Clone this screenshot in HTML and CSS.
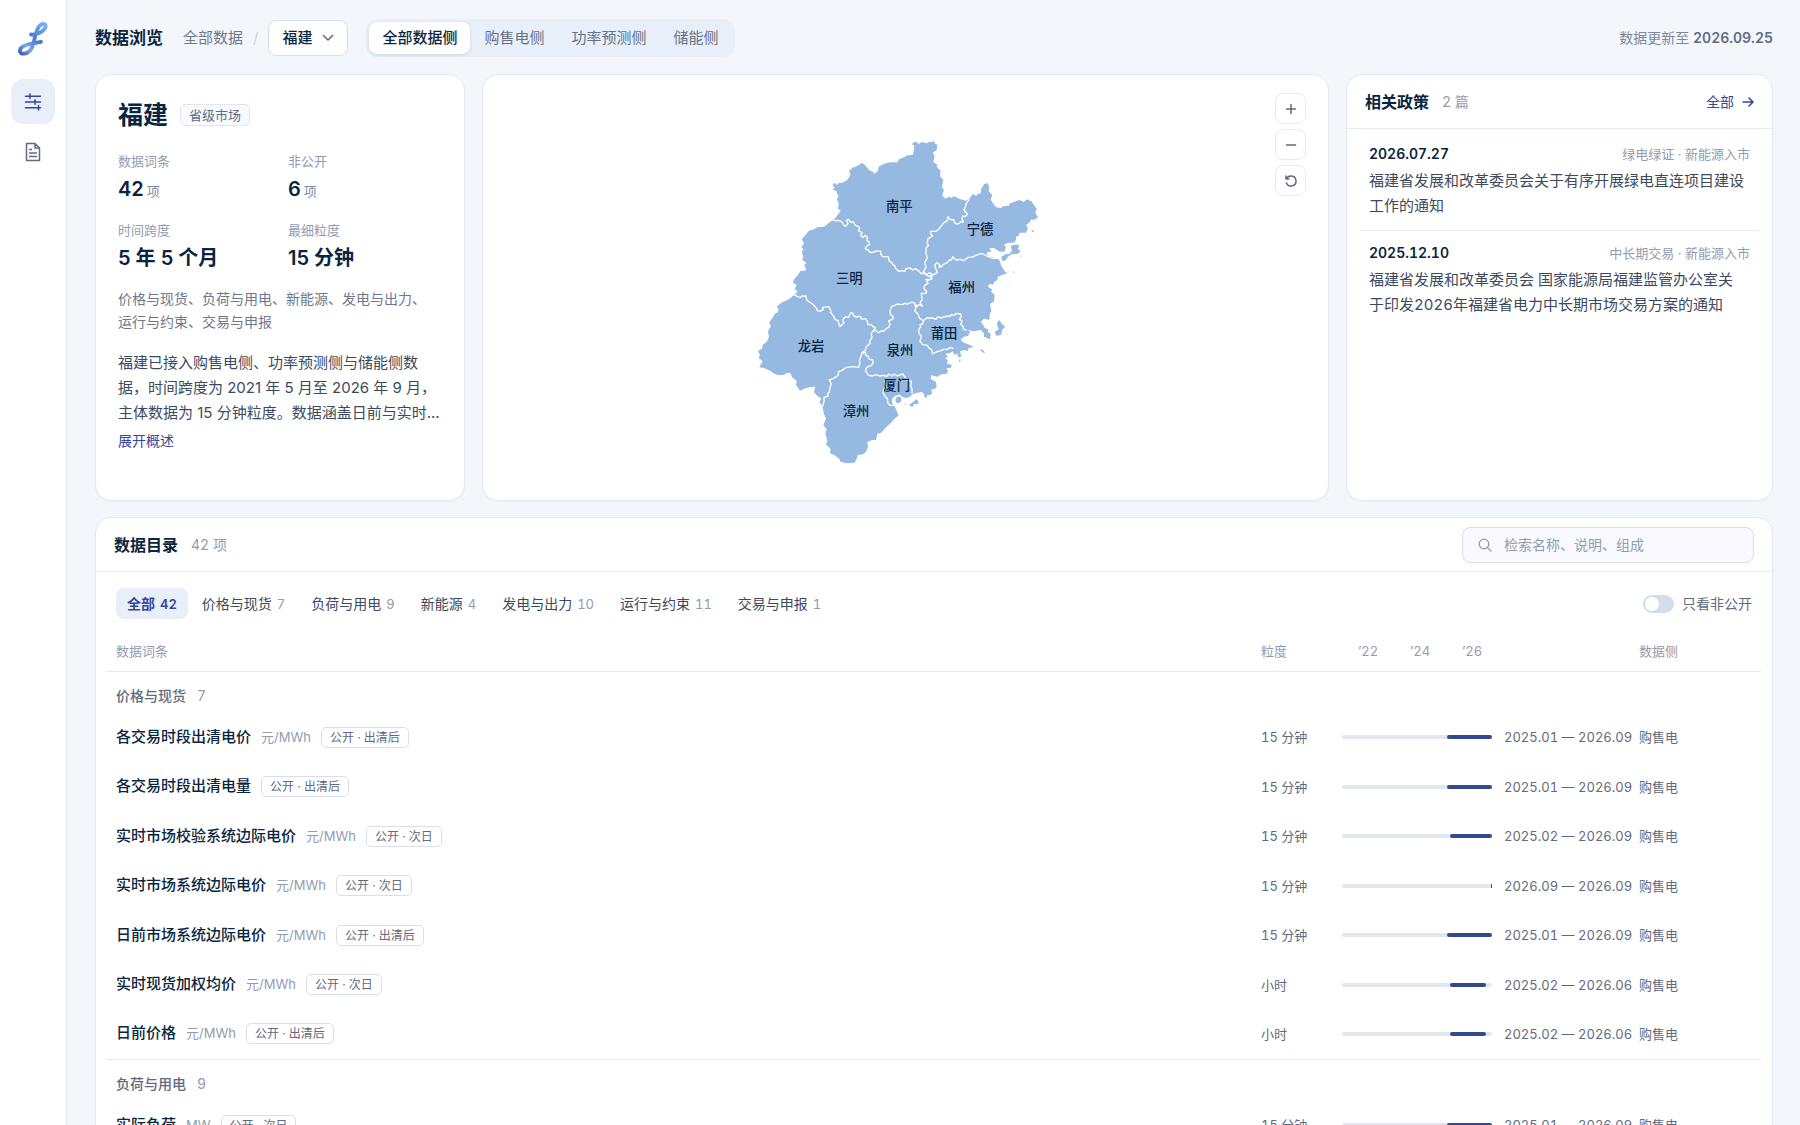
FILE: index.html
```html
<!DOCTYPE html>
<html lang="zh-CN">
<head>
<meta charset="utf-8">
<meta name="viewport" content="width=device-width, initial-scale=1">
<title>数据浏览 · 福建</title>
<link rel="stylesheet" href="styles.css">
</head>
<body>
<div class="app">
  <nav class="sidebar" aria-label="主导航">
    <a class="logo" href="#" aria-label="首页">
      <svg width="32" height="36" viewBox="0 0 32 36" fill="none" aria-hidden="true">
        <defs>
          <linearGradient id="ribbon" x1="28" y1="3" x2="3" y2="33" gradientUnits="userSpaceOnUse">
            <stop offset="0" stop-color="#7db4ee"/><stop offset=".45" stop-color="#4a7bd0"/><stop offset=".75" stop-color="#78a9ea"/><stop offset="1" stop-color="#3a5cb4"/>
          </linearGradient>
        </defs>
        <path d="M14 13.500C19 14 27 11 28.500 6C29.300 2.800 26 2.200 23.500 4C19 7.500 18.500 15 16.500 22C15 28 11.500 32.500 7 32.700C2.800 33 1.800 29.500 4.500 26.500C8 22.700 17 22.500 24 20.800" stroke="url(#ribbon)" stroke-width="3.800" stroke-linecap="round" stroke-linejoin="round"/>
      </svg>
    </a>
    <a class="nav-item is-active" href="#" aria-label="数据浏览">
      <svg width="18" height="18" viewBox="0 0 18 18" fill="none" stroke="currentColor" stroke-width="1.500" stroke-linecap="round" aria-hidden="true">
        <path d="M1.500 3.200h15M1.500 9h15M1.500 14.800h15M6 1v4.400M11 6.800v4.400M14.500 12.600V17"/>
      </svg>
    </a>
    <a class="nav-item" href="#" aria-label="文档">
      <svg width="18" height="20" viewBox="0 0 18 20" fill="none" stroke="currentColor" stroke-width="1.500" stroke-linejoin="round" aria-hidden="true">
        <path d="M2.500 1.500h8.500l4.500 4.500v12.500h-13zM11 1.500V6h4.500M5 7.500h3M5 11h8M5 14.500h8"/>
      </svg>
    </a>
  </nav>

  <main class="main">
    <header class="topbar">
      <h1 class="page-title">数据浏览</h1>
      <div class="crumbs"><a href="#">全部数据</a><span class="slash">/</span></div>
      <button class="region-picker" type="button" aria-haspopup="listbox">福建
        <svg width="12" height="8" viewBox="0 0 12 8" fill="none" stroke="currentColor" stroke-width="1.600" stroke-linecap="round" stroke-linejoin="round" aria-hidden="true"><path d="M1.500 1.500L6 6l4.500-4.500"/></svg>
      </button>
      <div class="segments" role="group" aria-label="数据侧">
        <button class="segment is-active" type="button">全部数据侧</button>
        <button class="segment" type="button">购售电侧</button>
        <button class="segment" type="button">功率预测侧</button>
        <button class="segment" type="button">储能侧</button>
      </div>
      <p class="updated">数据更新至 <strong>2026.09.25</strong></p>
    </header>

    <div class="overview">
      <section class="card profile">
        <div class="profile-head"><h2>福建</h2><span class="badge">省级市场</span></div>
        <dl class="stats">
          <div><dt>数据词条</dt><dd>42<small>项</small></dd></div>
          <div><dt>非公开</dt><dd>6<small>项</small></dd></div>
          <div><dt>时间跨度</dt><dd>5 年 5 个月</dd></div>
          <div><dt>最细粒度</dt><dd>15 分钟</dd></div>
        </dl>
        <p class="topics">价格与现货、负荷与用电、新能源、发电与出力、运行与约束、交易与申报</p>
        <p class="summary">福建已接入购售电侧、功率预测侧与储能侧数据，时间跨度为 2021 年 5 月至 2026 年 9 月，主体数据为 15 分钟粒度。数据涵盖日前与实时...</p>
        <button class="text-button" type="button">展开概述</button>
      </section>

      <section class="card map-card" aria-label="福建地图">
        <svg class="map" viewBox="16 -66 900 1080" role="img" aria-label="福建省地市分布">
          <path class="land" d="M548 30L545 36 535 36 528 40 515 36 503 42 497 35 492 36 483 42 491 47 490 58 487 74 470 76 460 82 445 88 440 97 420 97 405 100 395 104 384 110 382 122 372 131 365 124 358 122 348 112 342 104 333 98 326 104 315 110 303 114 302 120 295 118 299 136 290 150 275 158 262 160 260 165 250 158 246 166 252 174 244 178 258 184 259 192 264 198 258 208 264 218 262 236 270 242 256 262 248 270 238 276 228 284 220 290 200 292 190 298 175 302 162 318 153 328 160 340 152 352 158 358 154 366 158 382 154 388 167 400 160 406 166 414 164 422 150 422 142 434 130 448 127 458 138 464 132 476 141 486 128 494 120 504 105 512 92 518 78 530 84 538 82 546 72 552 66 564 56 576 60 590 52 604 55 620 48 636 36 644 34 656 22 662 28 676 24 684 36 694 26 712 40 714 58 722 72 732 86 736 100 734 110 728 120 730 124 742 138 752 136 764 148 782 160 776 175 772 194 770 190 786 198 796 212 806 206 816 212 824 216 834 220 852 226 866 218 886 228 898 224 912 230 930 226 944 240 956 238 970 252 976 266 986 270 996 290 1000 312 998 318 986 322 974 334 974 346 966 352 950 350 936 364 930 376 930 380 912 392 908 406 892 420 880 430 868 444 856 438 842 432 828 424 818 424 808 432 798 446 794 456 802 468 804 478 800 486 792 500 788 514 786 520 792 522 802 528 804 530 794 538 796 544 790 542 778 552 778 558 770 556 756 540 746 542 736 560 740 574 732 586 732 592 726 588 714 600 714 604 706 588 700 592 692 584 684 592 680 584 672 600 668 606 664 612 676 620 670 622 682 632 680 628 664 640 660 650 664 654 654 668 652 660 646 650 642 636 636 630 628 640 620 652 618 658 606 652 600 668 604 690 600 700 610 700 620 718 628 720 612 712 606 712 598 702 594 696 582 690 576 700 566 716 570 718 550 722 544 718 522 730 514 732 494 722 486 724 478 712 470 716 462 728 464 730 456 740 450 742 440 756 434 770 430 762 424 752 408 748 394 742 386 720 380 708 374 710 366 722 366 716 354 730 354 745 364 760 366 766 352 760 344 772 338 790 338 796 330 796 320 806 316 806 308 826 308 832 294 826 286 838 276 842 268 850 270 862 262 854 248 858 236 850 226 842 214 828 208 820 216 806 210 790 216 778 220 774 228 760 228 750 234 736 232 728 222 720 208 725 196 714 184 716 174 712 160 700 162 698 168 692 174 690 190 680 192 678 198 666 192 656 206 645 212 626 206 608 198 604 204 596 200 584 206 574 196 580 180 574 172 578 150 568 138 570 122 558 110 560 104 548 96 552 78 546 68 558 60 560 44 552 40Z"/>
          <path class="land" d="M780 348L790 344 806 344 802 356 810 364 800 372 784 372 772 380 764 392 754 392 752 380 766 372 776 372 784 362ZM738 580L746 570 752 580 764 590 754 600 752 614 738 618 732 606 744 598ZM688 660L694 658 704 668 698 668ZM842 302L848 300 850 306 845 307ZM808 376L813 378 810 382ZM474 816L480 822 490 814 496 808 504 814 502 822 490 822 486 830 476 828 478 822ZM462 818L466 822 463 826ZM624 690L630 688 628 698ZM786 424L791 426 788 430ZM771 466L774 468 771 470Z"/>
          <path class="border" d="M248 272L262 271 272 274 280 286 286 288 292 280 287 272 293 268 300 276 308 276 314 286 324 290 327 296 323 302 334 308 330 318 338 322 342 316 350 322 349 332 356 336 356 344 348 348 344 356 354 362 360 368 372 366 378 362 390 364 390 372 396 380 412 380 416 386 414 392 424 398 426 404 432 406 434 414 444 424 454 422 462 424 466 416 478 414 486 420 494 416 506 424 512 432 518 428 528 436 540 440 545 446M656 208L648 218 644 230 640 240 650 252 644 260 636 258 634 266 638 276 630 276 622 282 612 280 610 270 598 268 592 260 590 272 580 278 570 290 566 296 556 304 540 304 540 312 546 318 532 326 530 340 534 346 526 354 526 370 530 384 522 398 526 412 518 424 528 434 536 428 545 434 536 442M540 442L548 434 560 428 556 418 552 404 560 398 568 406 564 412 572 410 580 402 590 398 596 390 602 390 606 380 616 390 628 388 640 392 652 382 662 382 676 376 692 370 708 378 720 382 728 386 742 384M545 446L534 450 526 448 532 460 522 466 520 476 528 484 526 490 512 490 514 510 508 518 515 528 504 524 500 530 492 520 484 516 472 522 462 520 455 524 440 522 432 526 422 530 418 544 420 554 428 560 426 568 414 572 418 584 414 592 406 596 400 604 392 602 384 608 376 602 368 602M124 496L134 494 140 500 150 502 154 498 166 498 168 510 176 516 186 522 198 536 200 542 208 544 218 538 216 532 234 530 240 540 240 548 250 560 252 568 262 572 268 590 276 582 280 578 276 570 284 560 294 562 300 548 306 548 308 556 318 562 324 558 332 562 332 568 344 566 350 574 352 584 362 584 368 590 374 594 368 602 362 610 364 622 358 632 358 640 346 652 344 662 334 668 330 682 326 690 328 700 324 712 310 710 290 712 280 716 274 722 264 724 262 736 248 746 236 750 242 762 238 772 236 786 232 790 232 798 220 802 220 816 214 832M334 670L344 668 346 676 352 678 356 688 366 690 368 700 362 706 348 712 344 722 354 736 366 738 376 734 388 738 400 736 408 740 414 732 424 738 430 732 440 738 450 734 456 732 462 740 468 750 482 754 480 768 484 776 484 790M402 750L406 768 398 780 398 790 404 800 410 806 412 820 418 826 430 826M492 522L496 534 492 542 502 552 506 564 518 572 528 564 545 564 556 568 562 560 570 564 590 558 598 560 602 554 610 556 618 550 630 552 632 560 626 568 634 572 630 582 638 590 638 598 648 600M518 572L516 582 508 584 510 590 504 600 506 612 512 618 508 634 516 644 530 646 536 656 542 658 546 672 556 666 570 662 580 658 590 658 600 652 608 656"/>
          <path class="islet" d="M434 802L444 796 454 802 454 814 446 822 436 820 432 812Z"/>
          <g class="city">
            <text x="446" y="242">南平</text><text x="688" y="313">宁德</text><text x="296" y="459">三明</text>
            <text x="633" y="487">福州</text><text x="181" y="663">龙岩</text><text x="448" y="674">泉州</text>
            <text x="580" y="623">莆田</text><text x="438" y="779">厦门</text><text x="316" y="858">漳州</text>
          </g>
        </svg>
        <div class="map-tools">
          <button type="button" aria-label="放大"><svg width="12" height="12" viewBox="0 0 12 12" fill="none" stroke="currentColor" stroke-width="1.500" stroke-linecap="round"><path d="M6 1.500v9M1.500 6h9"/></svg></button>
          <button type="button" aria-label="缩小"><svg width="12" height="12" viewBox="0 0 12 12" fill="none" stroke="currentColor" stroke-width="1.500" stroke-linecap="round"><path d="M1.500 6h9"/></svg></button>
          <button type="button" aria-label="复位"><svg width="12" height="12" viewBox="0 0 12 12" fill="none" stroke="currentColor" stroke-width="1.500" stroke-linecap="round" stroke-linejoin="round"><path d="M1 1v3h3M1.200 4C2.200 2 4 1 6 1a5 5 0 1 1-4.600 7"/></svg></button>
        </div>
      </section>

      <section class="card policies">
        <header class="card-head policy-head">
          <h2>相关政策</h2><span class="count">2 篇</span>
          <a class="more" href="#">全部
            <svg width="12" height="12" viewBox="0 0 12 12" fill="none" stroke="currentColor" stroke-width="1.600" stroke-linecap="round" stroke-linejoin="round" aria-hidden="true"><path d="M1 6h10M7 2l4 4-4 4"/></svg></a>
        </header>
        <ul class="policy-list">
          <li><div class="policy-meta"><time>2026.07.27</time><span>绿电绿证 · 新能源入市</span></div>
            <a href="#">福建省发展和改革委员会关于有序开展绿电直连项目建设工作的通知</a></li>
          <li><div class="policy-meta"><time>2025.12.10</time><span>中长期交易 · 新能源入市</span></div>
            <a href="#">福建省发展和改革委员会 国家能源局福建监管办公室关于印发2026年福建省电力中长期市场交易方案的通知</a></li>
        </ul>
      </section>
    </div>

    <section class="card catalog">
      <header class="card-head">
        <h2>数据目录</h2><span class="count">42 项</span>
        <label class="search">
          <svg width="14" height="14" viewBox="0 0 14 14" fill="none" stroke="currentColor" stroke-width="1.300" stroke-linecap="round" aria-hidden="true"><circle cx="6" cy="6" r="4.800"/><path d="M9.600 9.600L13 13"/></svg>
          <input type="search" placeholder="检索名称、说明、组成" aria-label="检索名称、说明、组成">
        </label>
      </header>
      <div class="filters">
        <button class="chip is-active" type="button">全部<span>42</span></button>
        <button class="chip" type="button">价格与现货<span>7</span></button>
        <button class="chip" type="button">负荷与用电<span>9</span></button>
        <button class="chip" type="button">新能源<span>4</span></button>
        <button class="chip" type="button">发电与出力<span>10</span></button>
        <button class="chip" type="button">运行与约束<span>11</span></button>
        <button class="chip" type="button">交易与申报<span>1</span></button>
        <label class="switch"><input type="checkbox">只看非公开</label>
      </div>
      <table class="entries">
        <colgroup><col><col class="col-grain"><col class="col-track"><col class="col-range"><col class="col-side"></colgroup>
        <thead>
          <tr><th scope="col">数据词条</th><th scope="col">粒度</th><th scope="col"><div class="axis"><span>’22</span><span>’24</span><span>’26</span></div></th><td></td><th scope="col">数据侧</th></tr>
        </thead>
        <tbody>
          <tr class="group"><th colspan="5" scope="rowgroup">价格与现货<span>7</span></th></tr>
          <tr><td><a href="#">各交易时段出清电价</a><span class="unit">元/MWh</span><span class="tag">公开 · 出清后</span></td><td>15 分钟</td><td><div class="track"><i style="margin-left:70%;width:30%"></i></div></td><td>2025.01 — 2026.09</td><td>购售电</td></tr>
          <tr><td><a href="#">各交易时段出清电量</a><span class="tag">公开 · 出清后</span></td><td>15 分钟</td><td><div class="track"><i style="margin-left:70%;width:30%"></i></div></td><td>2025.01 — 2026.09</td><td>购售电</td></tr>
          <tr><td><a href="#">实时市场校验系统边际电价</a><span class="unit">元/MWh</span><span class="tag">公开 · 次日</span></td><td>15 分钟</td><td><div class="track"><i style="margin-left:72%;width:28%"></i></div></td><td>2025.02 — 2026.09</td><td>购售电</td></tr>
          <tr><td><a href="#">实时市场系统边际电价</a><span class="unit">元/MWh</span><span class="tag">公开 · 次日</span></td><td>15 分钟</td><td><div class="track"><i style="margin-left:99%;width:1%"></i></div></td><td>2026.09 — 2026.09</td><td>购售电</td></tr>
          <tr><td><a href="#">日前市场系统边际电价</a><span class="unit">元/MWh</span><span class="tag">公开 · 出清后</span></td><td>15 分钟</td><td><div class="track"><i style="margin-left:70%;width:30%"></i></div></td><td>2025.01 — 2026.09</td><td>购售电</td></tr>
          <tr><td><a href="#">实时现货加权均价</a><span class="unit">元/MWh</span><span class="tag">公开 · 次日</span></td><td>小时</td><td><div class="track"><i style="margin-left:72%;width:24%"></i></div></td><td>2025.02 — 2026.06</td><td>购售电</td></tr>
          <tr><td><a href="#">日前价格</a><span class="unit">元/MWh</span><span class="tag">公开 · 出清后</span></td><td>小时</td><td><div class="track"><i style="margin-left:72%;width:24%"></i></div></td><td>2025.02 — 2026.06</td><td>购售电</td></tr>
        </tbody>
        <tbody>
          <tr class="group"><th colspan="5" scope="rowgroup">负荷与用电<span>9</span></th></tr>
          <tr><td><a href="#">实际负荷</a><span class="unit">MW</span><span class="tag">公开 · 次日</span></td><td>15 分钟</td><td><div class="track"><i style="margin-left:70%;width:30%"></i></div></td><td>2025.01 — 2026.09</td><td>购售电</td></tr>
        </tbody>
      </table>
    </section>
  </main>
</div>
</body>
</html>
```
FILE: styles.css
```css
:root {
  --ink: #0a2540;
  --text: #3c4a60;
  --soft: #5f6b80;
  --muted: #929cb0;
  --line: #e4eaf2;
  --brand: #35479c;
  --tint: #e8eff9;
}

* { box-sizing: border-box; }

body {
  margin: 0;
  background: #f3f7fb;
  color: var(--text);
  font: 14px/20px Inter, "Noto Sans CJK SC", sans-serif;
  font-variant-numeric: tabular-nums;
}

h1, h2, p, dl, dd, ul { margin: 0; padding: 0; }
button, input { font: inherit; color: inherit; }
button { padding: 0; border: 0; background: none; cursor: pointer; font-variant-numeric: inherit; }
a { color: inherit; text-decoration: none; }
svg { display: block; flex: none; }

.app { display: flex; height: 100vh; }

/* Sidebar */
.sidebar {
  display: flex;
  flex: none;
  flex-direction: column;
  align-items: center;
  gap: 5px;
  width: 67px;
  padding-top: 21px;
  border-right: 1px solid var(--line);
  background: #fff;
}
.logo { margin-bottom: 17px; }
.nav-item {
  display: grid;
  place-items: center;
  width: 44px;
  height: 45px;
  border-radius: 12px;
  color: var(--soft);
}
.nav-item.is-active { background: var(--tint); color: var(--brand); }

.main {
  flex: 1;
  min-width: 0;
  padding: 0 27px 28px 28px;
  overflow-y: auto;
  scrollbar-width: none;
}

/* Top bar */
.topbar { display: flex; align-items: center; height: 75px; }
.page-title { color: var(--ink); font-size: 17px; font-weight: 600; }
.crumbs { display: flex; gap: 10px; margin: 0 10px 0 20px; color: #6d788c; font-size: 15px; }
.slash { color: #ccd4e0; }
.region-picker {
  display: flex;
  align-items: center;
  gap: 10px;
  height: 36px;
  padding: 0 13px;
  border: 1px solid #d8dfeb;
  border-radius: 8px;
  background: #fff;
  color: var(--ink);
  font-size: 15px;
  font-weight: 500;
}
.region-picker svg { color: var(--soft); }
.segments {
  display: flex;
  gap: 1px;
  margin-left: 18px;
  padding: 3px;
  border-radius: 12px;
  background: #e9eff8;
}
.segment {
  height: 32px;
  padding: 0 13px;
  border-radius: 8px;
  color: #667287;
  font-size: 15px;
}
.segment.is-active {
  background: #fff;
  box-shadow: 0 1px 3px #0a254026;
  color: var(--ink);
  font-weight: 500;
}
.updated { margin-left: auto; color: #7d889b; }
.updated strong { color: var(--soft); font-weight: 600; }

/* Cards */
.card {
  border: 1px solid var(--line);
  border-radius: 16px;
  background: #fff;
  box-shadow: 0 1px 2px #0a25400a;
}
.card-head {
  display: flex;
  align-items: center;
  height: 54px;
  padding: 0 18px;
  border-bottom: 1px solid var(--line);
}
.card-head h2 { color: var(--ink); font-size: 16px; font-weight: 600; }
.count { margin-left: 13px; color: var(--muted); }

.overview {
  display: grid;
  grid-template-columns: 370px minmax(0, 1fr) 427px;
  gap: 17px;
  min-height: 427px;
  margin-top: -1px;
  margin-bottom: 16px;
}

/* Region profile */
.profile { padding: 24px 22px 22px; font-variant-numeric: normal; }
.profile-head { display: flex; align-items: center; gap: 12px; margin-bottom: 20px; }
.profile-head h2 { color: var(--ink); font-size: 25px; font-weight: 600; line-height: 32px; }
.badge {
  padding: 0 8px;
  border: 1px solid #dfe6f0;
  border-radius: 5px;
  background: #f8fafd;
  color: var(--soft);
  font-size: 13px;
}
.stats { display: grid; grid-template-columns: 1fr 1fr; column-gap: 16px; row-gap: 15px; }
.stats dt { margin-bottom: 4px; color: var(--muted); font-size: 13px; }
.stats dd { color: var(--ink); font-size: 20px; font-weight: 600; line-height: 28px; }
.stats small { margin-left: 3px; color: #7d889b; font-size: 13px; font-weight: 400; }
.topics { margin-top: 15px; padding-right: 8px; color: #6d788c; line-height: 23px; }
.summary { margin: 17px 0 6px; font-size: 15px; line-height: 25px; }
.text-button { color: var(--brand); }

/* Map */
.map-card { position: relative; display: grid; place-items: center; }
.map { width: 300px; height: 360px; }
.land { fill: #96b9e2; }
.border { fill: none; stroke: #fff; stroke-width: 4; stroke-linejoin: round; }
.islet { fill: #96b9e2; stroke: #fff; stroke-width: 4; }
.city { fill: var(--ink); font-size: 40px; font-weight: 500; text-anchor: middle; }
.map-tools {
  position: absolute;
  top: 18px;
  right: 22px;
  display: grid;
  gap: 5px;
}
.map-tools button {
  display: grid;
  place-items: center;
  width: 31px;
  height: 31px;
  border: 1px solid var(--line);
  border-radius: 8px;
  background: #fff;
  color: var(--soft);
}

/* Policies */
.more { display: flex; align-items: center; gap: 8px; margin-left: auto; color: var(--brand); }
.policy-list { padding: 3px 13px; list-style: none; }
.policy-list li { padding: 12px 9px; }
.policy-list li + li { border-top: 1px solid var(--line); }
.policy-meta { display: flex; justify-content: space-between; margin-bottom: 4px; color: var(--muted); font-size: 13px; }
.policy-meta time { color: var(--ink); font-size: 14px; font-weight: 600; }
.policy-list a { display: block; padding-right: 4px; font-size: 15px; line-height: 25px; }

/* Catalog */
.search {
  display: flex;
  align-items: center;
  gap: 12px;
  width: 292px;
  height: 36px;
  margin-left: auto;
  padding: 0 15px;
  border: 1px solid #d8dfeb;
  border-radius: 8px;
  background: #f8faff;
  color: var(--muted);
}
.search input { flex: 1; min-width: 0; padding: 0; border: 0; outline: 0; background: none; }
.search input::placeholder { color: var(--muted); opacity: 1; }

.filters { display: flex; align-items: center; gap: 2px; padding: 16px 20px 12px; }
.chip { height: 31px; padding: 0 12px; border-radius: 8px; }
.chip span { margin-left: 5px; color: var(--muted); font-size: 13px; }
.chip.is-active, .chip.is-active span { color: var(--brand); font-weight: 600; }
.chip.is-active { padding: 0 11px; background: var(--tint); }
.switch { display: flex; align-items: center; gap: 8px; margin-left: auto; color: var(--soft); }
.switch input {
  width: 31px;
  height: 18px;
  margin: 0;
  padding: 2px;
  border-radius: 9px;
  background: #d3deeb;
  appearance: none;
}
.switch input::before {
  display: block;
  width: 14px;
  height: 14px;
  border-radius: 50%;
  background: #fff;
  content: "";
}
.switch input:checked { background: var(--brand); }
.switch input:checked::before { margin-left: auto; }

.entries {
  width: calc(100% - 22px);
  margin: 0 11px;
  border-collapse: collapse;
  table-layout: fixed;
  color: var(--soft);
  font-size: 13px;
}
.entries th, .entries td { padding: 0; font-weight: 400; text-align: left; white-space: nowrap; }
.entries th:first-child, .entries td:first-child { padding-left: 9px; }
.col-grain { width: 81px; }
.col-track { width: 162px; }
.col-range { width: 135px; }
.col-side { width: 122px; }
.entries thead tr { height: 40px; border-bottom: 1px solid var(--line); color: var(--muted); }
.entries tbody + tbody { border-top: 1px solid var(--line); }
.entries tr { height: 49px; }
.entries tr:nth-child(even) { height: 50px; }
.entries .group { height: 41px; }
.entries .group th { padding-top: 8px; color: var(--soft); font-size: 14px; font-weight: 500; }
.group span { margin-left: 11px; color: var(--muted); font-weight: 400; }
.entries a { color: var(--ink); font-size: 15px; font-weight: 500; }
.unit { margin-left: 10px; color: var(--muted); }
.tag {
  display: inline-block;
  margin-left: 10px;
  padding: 0 8px;
  border: 1px solid #d8dfeb;
  border-radius: 5px;
  font-size: 12px;
  line-height: 19px;
}
.axis { display: grid; grid-template-columns: repeat(3, 52px); text-align: center; }
.track { width: 150px; height: 4px; border-radius: 2px; background: #e2e7ef; }
.track i { display: block; height: 4px; border-radius: 2px; background: #32488f; }
```
